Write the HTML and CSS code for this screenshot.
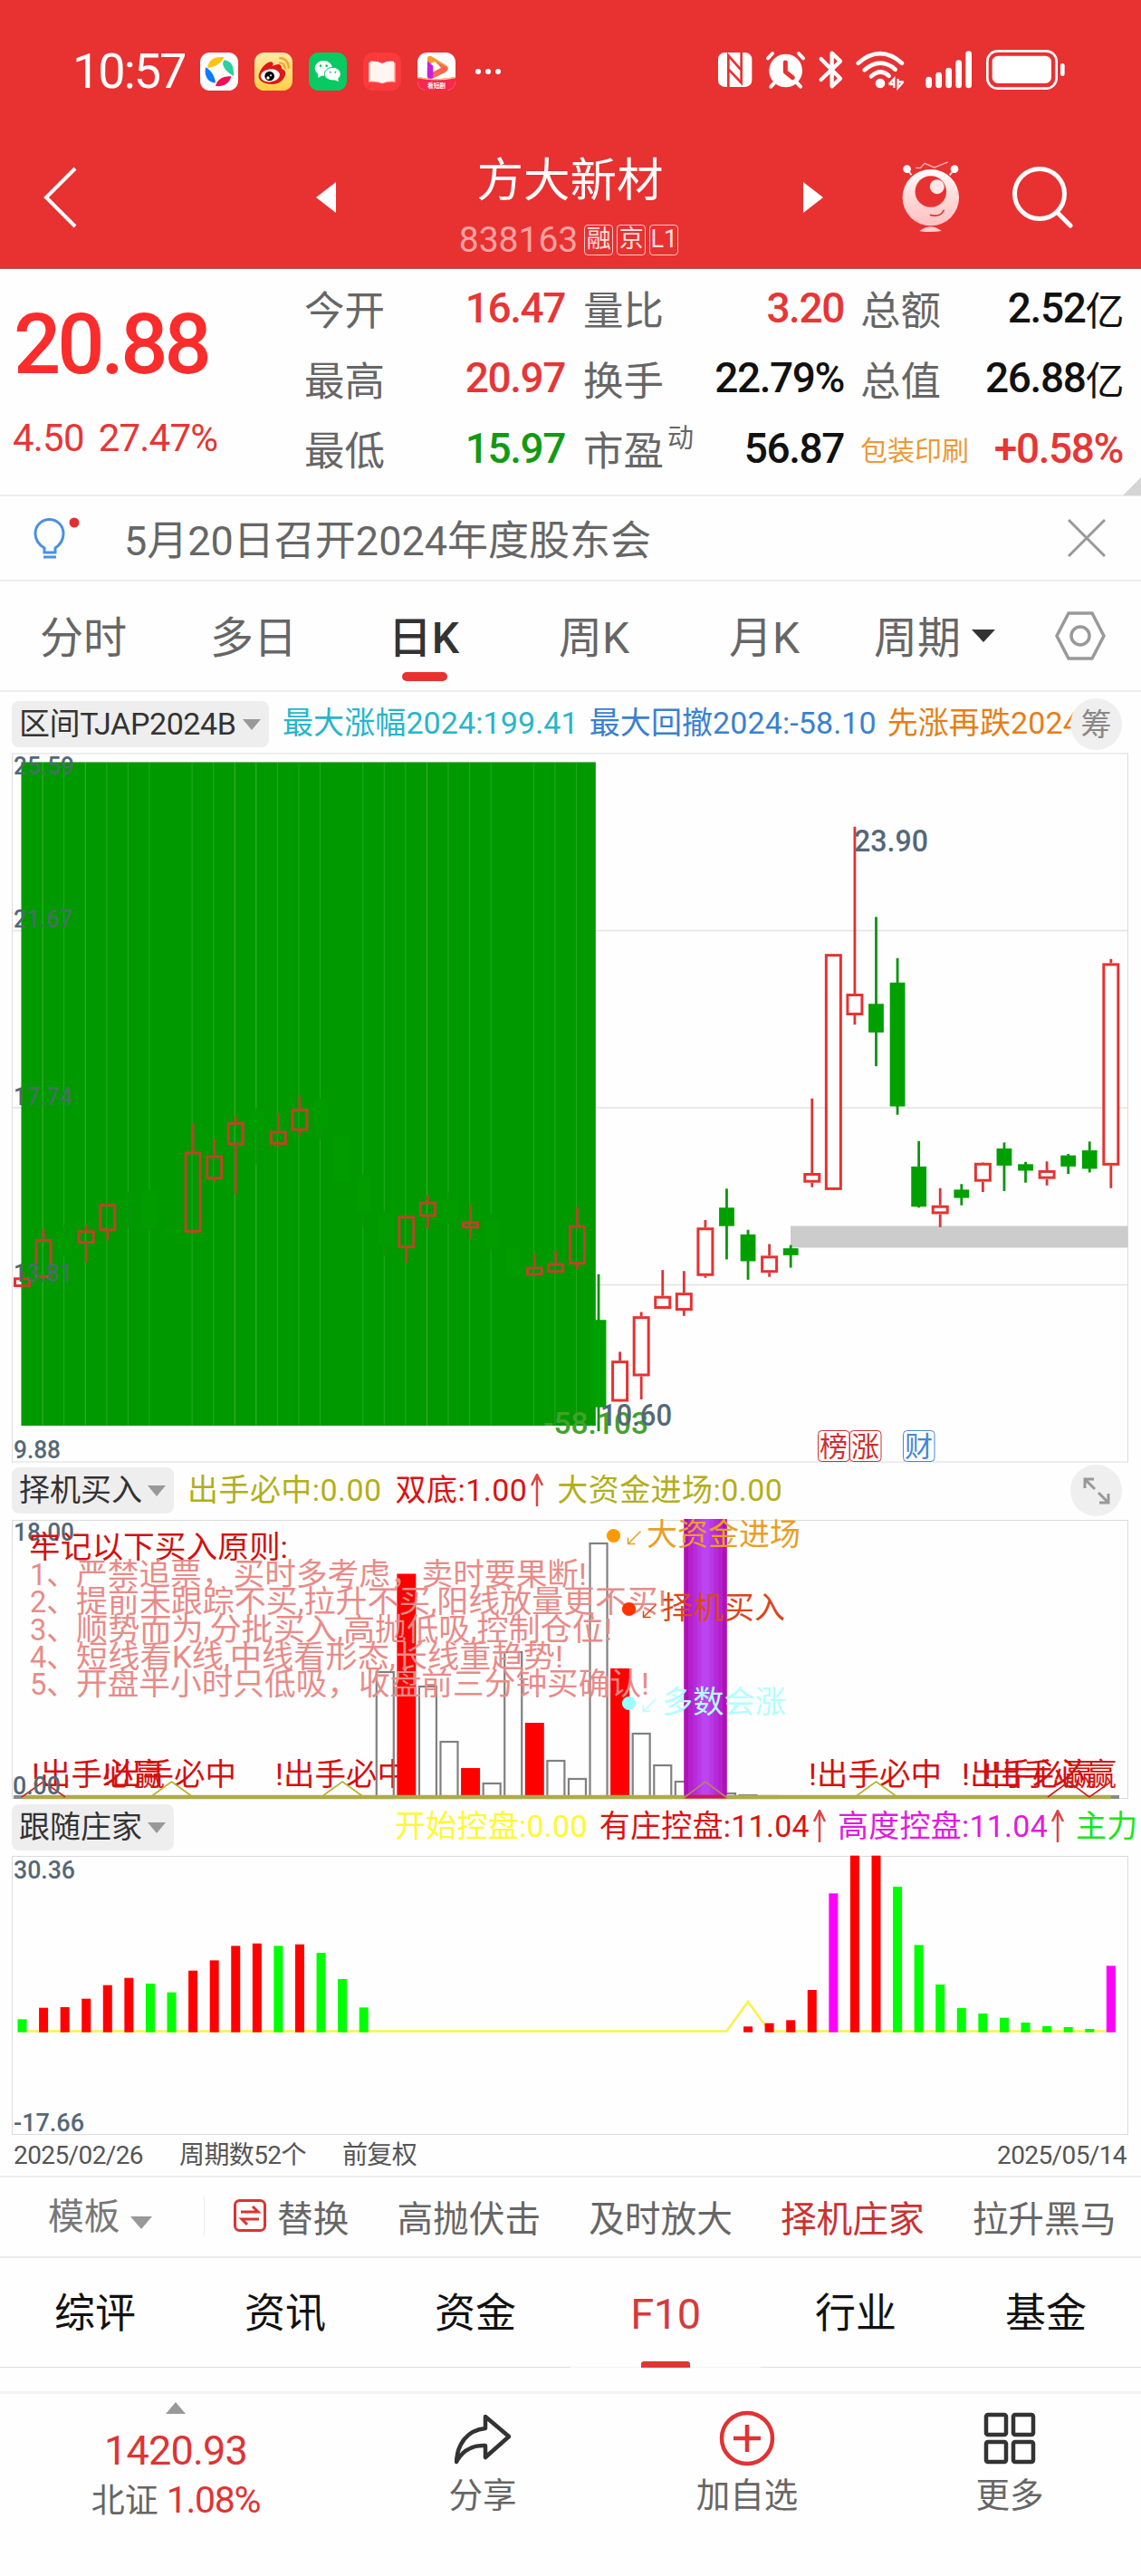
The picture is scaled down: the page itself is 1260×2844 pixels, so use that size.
FILE: index.html
```html
<!DOCTYPE html>
<html lang="zh-CN">
<head>
    <meta charset="UTF-8">
    <meta name="viewport" content="width=device-width, initial-scale=1.0">
    <title>方大新材 838163</title>
    <link rel="stylesheet" href="styles.css">
</head>
<body>
    <header class="header">
        <div class="status-bar">
            <span class="time">10:57</span>
            <div class="apps">
                <svg class="app" viewBox="0 0 126 126">
                    <rect width="126" height="126" rx="32" fill="#fff"/>
                    <path d="M25 45C31 22 50 12 79 16C69 37 49 49 25 51z" fill="#ffc40d"/>
                    <path d="M79 25C103 28 113 44 111 78C92 67 77 53 75 36z" fill="#2ed0a2"/>
                    <path d="M18 49C32 55 49 77 51 100C29 102 12 81 18 49z" fill="#0a7cf5"/>
                    <path d="M51 111C57 88 76 77 103 79C98 102 79 114 51 111z" fill="#f80d53"/>
                </svg>
                <svg class="app" viewBox="0 0 126 126">
                    <defs>
                        <linearGradient id="weibo" x2="0" y2="1"><stop stop-color="#ffeaa9"/><stop offset="1" stop-color="#ffd044"/></linearGradient>
                    </defs>
                    <rect width="126" height="126" rx="32" fill="url(#weibo)"/>
                    <path d="M14 76C18 52 42 29 57 31Q65 35 60 44Q90 31 90 53Q108 60 101 77C91 105 59 109 37 102Q11 94 14 76z" fill="#df1818"/>
                    <ellipse cx="52" cy="76" rx="32" ry="21" fill="#fff" transform="rotate(-8 52 76)"/>
                    <circle cx="50" cy="78" r="16" fill="#050505"/>
                    <circle cx="45" cy="84" r="5" fill="#fff"/>
                    <circle cx="54" cy="76" r="3" fill="#fff"/>
                    <path d="M81 34Q101 33 101 55M82 18Q113 19 114 53" fill="none" stroke="#f5a52b" stroke-width="7"/>
                </svg>
                <svg class="app" viewBox="0 0 126 126">
                    <rect width="126" height="126" rx="32" fill="#07ca62"/>
                    <ellipse cx="49" cy="52" rx="29" ry="25" fill="#fff"/>
                    <path d="M31 68L30 84L46 75z" fill="#fff"/>
                    <ellipse cx="79" cy="71" rx="27" ry="22" fill="#fff" stroke="#07ca62" stroke-width="3"/>
                    <path d="M82 90L99 96L96 83z" fill="#fff"/>
                    <g fill="#07ca62"><circle cx="39" cy="44" r="4"/><circle cx="59" cy="44" r="4"/><circle cx="71" cy="65" r="3"/><circle cx="88" cy="65" r="3"/></g>
                </svg>
                <svg class="app" viewBox="0 0 126 126">
                    <rect width="126" height="126" rx="32" fill="#fb3a3b"/>
                    <path d="M18 34Q43 26 63 37Q82 26 107 34V98Q84 95 63 103Q42 95 18 98z" fill="#ffb7ac"/>
                    <path d="M23 29Q45 27 63 36Q80 27 102 29V94Q81 92 63 101Q44 92 23 94z" fill="#fff6f2"/>
                </svg>
                <svg class="app" viewBox="0 0 126 126">
                    <defs>
                        <clipPath id="app-clip"><rect width="126" height="126" rx="32"/></clipPath>
                    </defs>
                    <g clip-path="url(#app-clip)">
                        <rect width="126" height="126" fill="#fff"/>
                        <path d="M33 17Q37 5 56 18L99 45Q106 55 95 60L60 31Q40 35 33 48z" fill="#f79a32"/>
                        <path d="M98 47Q106 56 90 67L50 86V65L78 50L60 31z" fill="#ff6550"/>
                        <path d="M33 28L52 44V84Q36 95 32 78z" fill="#c620dc"/>
                        <path d="M0 81Q63 94 126 81V126H0z" fill="#f8284c"/>
                        <path d="M0 81Q63 94 126 81V85Q63 98 0 85z" fill="#ffc87a"/>
                    </g>
                    <text x="63" y="116" class="app-label">看短剧</text>
                </svg>
            </div>
            <svg class="dots" viewBox="0 0 30 8"><circle cx="4" cy="4" r="3"/><circle cx="15" cy="4" r="3"/><circle cx="26" cy="4" r="3"/></svg>
            <svg class="system-icons" viewBox="0 0 1260 240">
                <rect x="39" y="57" width="112" height="114" rx="22" fill="#fff"/>
                <path d="M73 171V67L118 118M116 57V157L73 112" fill="none" stroke="#e83131" stroke-width="8"/>
                <circle cx="263" cy="117" r="55" fill="#fff"/>
                <path d="M204 76L219 60M321 76L306 60M225 158L214 170M301 158L312 170" stroke="#fff" stroke-width="12" stroke-linecap="round"/>
                <path d="M262 90V121L286 140" fill="none" stroke="#e83131" stroke-width="15" stroke-linecap="round" stroke-linejoin="round"/>
                <path d="M380 78L444 143L416 169V59L444 86L380 147" fill="none" stroke="#fff" stroke-width="13" stroke-linecap="round" stroke-linejoin="round"/>
                <path d="M503 92Q576 29 648 92M524 115Q576 70 626 113M546 136Q576 108 605 134" fill="none" stroke="#fff" stroke-width="14" stroke-linecap="round"/>
                <circle cx="576" cy="159" r="16" fill="#fff"/>
                <path d="M605 162L622 144V174M653 154L635 174V144M605 162H622M635 154H653" fill="none" stroke="#fff" stroke-width="7"/>
                <path d="M737 147V165M770 132V165M803 117V165M836 92V165M869 62V165" stroke="#fff" stroke-width="20" stroke-linecap="round"/>
                <rect x="931" y="52" width="229" height="124" rx="34" fill="none" stroke="#fff" stroke-width="8"/>
                <rect x="947" y="68" width="196" height="91" rx="20" fill="#fff"/>
                <path d="M1180 100V128" stroke="#fff" stroke-width="14" stroke-linecap="round"/>
            </svg>
        </div>
        <div class="nav-bar">
            <svg class="back" viewBox="0 0 38 68"><path d="M35 2L3 34L35 66"/></svg>
            <svg class="prev" viewBox="0 0 22 34"><path d="M0 17L22 0V34z"/></svg>
            <div class="stock">
                <h1>方大新材</h1>
                <div class="stock-code">
                    <span>838163</span><i>融</i><i>京</i><i>L1</i>
                </div>
            </div>
            <svg class="next" viewBox="0 0 22 34"><path d="M22 17L0 0V34z"/></svg>
            <svg class="robot" viewBox="0 0 200 250">
                <defs>
                    <linearGradient id="robot" x2="0" y2="1"><stop stop-color="#fff"/><stop offset=".5" stop-color="#ffd9d9"/><stop offset="1" stop-color="#ffc0c0"/></linearGradient>
                </defs>
                <path d="M25 32L40 52M183 32L167 52" stroke="#ffdede" stroke-width="6"/>
                <circle cx="25" cy="32" r="13" fill="#fff"/><circle cx="183" cy="32" r="13" fill="#fff"/>
                <path d="M54 28H70L84 13L116 27L161 9" fill="none" stroke="#ffb3b3" stroke-width="4"/>
                <circle cx="104" cy="127" r="94" fill="url(#robot)"/>
                <circle cx="104" cy="107" r="52" fill="#e83131"/>
                <circle cx="125" cy="91" r="24" fill="#ffe7e7"/>
                <path d="M101 185Q137 194 148 168" fill="none" stroke="#e83131" stroke-width="5"/>
                <path d="M66 238Q104 209 140 238Q104 244 66 238z" fill="#ffcccc"/>
            </svg>
            <svg class="search" viewBox="0 0 68 68"><circle cx="30" cy="30" r="27.5"/><path d="M49 50L64 65"/></svg>
        </div>
    </header>

    <section class="quote">
        <div class="price-box">
            <div class="price">20.88</div>
            <div class="change"><span>4.50</span><span>27.47%</span></div>
        </div>
        <div class="quote-grid">
            <label>今开</label><b class="up">16.47</b>
            <label>量比</label><b class="up">3.20</b>
            <label>总额</label><b>2.52<em>亿</em></b>
            <label>最高</label><b class="up">20.97</b>
            <label>换手</label><b>22.79%</b>
            <label>总值</label><b>26.88<em>亿</em></b>
            <label>最低</label><b class="down">15.97</b>
            <label>市盈<sup>动</sup></label><b>56.87</b>
            <label class="sector">包装印刷</label><b class="up">+0.58%</b>
        </div>
        <span class="corner"></span>
    </section>

    <section class="notice">
        <svg class="bulb" viewBox="0 0 56 54">
            <path d="M13 34Q3 28 3 18A15.500 15.500 0 0 1 34 18Q34 28 25 34V39H13zM12 44H26" fill="none" stroke="#4a90e2" stroke-width="3"/>
            <circle cx="46" cy="6" r="5.500" fill="#e03131"/>
        </svg>
        <p>5月20日召开2024年度股东会</p>
        <svg class="close" viewBox="0 0 42 42"><path d="M1 1L41 41M41 1L1 41"/></svg>
    </section>

    <nav class="period-tabs">
        <a>分时</a>
        <a>多日</a>
        <a class="active">日K</a>
        <a>周K</a>
        <a>月K</a>
        <a class="more">周期<i class="caret dark"></i></a>
        <svg class="settings" viewBox="0 0 56 54"><path d="M15 2H41L54 27L41 52H15L2 27z"/><circle cx="28" cy="27" r="10"/></svg>
    </nav>

    <div class="indicator-bar first">
        <button class="pill">区间TJAP2024B<i class="caret"></i></button>
        <div class="values clipped">
            <span class="cyan">最大涨幅2024:199.41</span>
            <span class="blue">最大回撤2024:-58.10</span>
            <span class="orange">先涨再跌2024:</span>
        </div>
        <span class="round">筹</span>
    </div>
    <svg class="chart" id="kline" viewBox="0 831 1260 784" width="1260" height="784"></svg>

    <div class="indicator-bar second">
        <button class="pill">择机买入<i class="caret"></i></button>
        <div class="values">
            <span class="olive">出手必中:0.00</span>
            <span class="red">双底:1.00<svg class="rise" viewBox="0 0 14 36"><path d="M7 36V2M1 13L7 1L13 13"/></svg></span>
            <span class="olive">大资金进场:0.00</span>
        </div>
        <span class="round"><svg class="expand" viewBox="0 0 30 30"><path d="M2 12V2H12M2 2L13 13M28 18V28H18M28 28L17 17"/></svg></span>
    </div>
    <svg class="chart" id="signal" viewBox="0 1676 1260 312" width="1260" height="312"></svg>

    <div class="indicator-bar third">
        <button class="pill">跟随庄家<i class="caret"></i></button>
        <div class="values">
            <span class="yellow">开始控盘:0.00</span>
            <span class="red">有庄控盘:11.04<svg class="rise" viewBox="0 0 14 36"><path d="M7 36V2M1 13L7 1L13 13"/></svg></span>
            <span class="magenta">高度控盘:11.04<svg class="rise" viewBox="0 0 14 36"><path d="M7 36V2M1 13L7 1L13 13"/></svg></span>
            <span class="green">主力</span>
        </div>
    </div>
    <svg class="chart" id="control" viewBox="0 2047 1260 311" width="1260" height="311"></svg>

    <div class="chart-footer">
        <span>2025/02/26</span><span>周期数52个</span><span>前复权</span><span>2025/05/14</span>
    </div>

    <div class="templates">
        <span class="template">模板<i class="caret"></i></span>
        <span class="swap">
            <svg viewBox="0 0 36 36"><rect x="1.500" y="1.500" width="33" height="33" rx="5"/><path d="M8 14H27L21 8M28 22H9L15 28"/></svg>替换
        </span>
        <span>高抛伏击</span>
        <span>及时放大</span>
        <span class="selected">择机庄家</span>
        <span>拉升黑马</span>
    </div>

    <nav class="info-tabs">
        <a>综评</a>
        <a>资讯</a>
        <a>资金</a>
        <a class="active">F10</a>
        <a>行业</a>
        <a>基金</a>
    </nav>

    <footer class="bottom-bar">
        <div class="index">
            <i class="caret-up"></i>
            <div class="index-value">1420.93</div>
            <div class="index-name">北证 <span>1.08%</span></div>
        </div>
        <div class="action">
            <svg viewBox="0 0 62 62"><path d="M34 7L60 29L34 52V39C19 38 9 44 2 57C3 37 14 22 34 20z"/></svg>
            <span>分享</span>
        </div>
        <div class="action add">
            <svg viewBox="0 0 62 62"><circle cx="31" cy="31" r="28"/><path d="M31 16V46M16 31H46"/></svg>
            <span>加自选</span>
        </div>
        <div class="action">
            <svg viewBox="0 0 62 62"><rect x="5" y="5" width="22" height="22" rx="2"/><rect x="35" y="5" width="22" height="22" rx="2"/><rect x="5" y="35" width="22" height="22" rx="2"/><rect x="35" y="35" width="22" height="22" rx="2"/></svg>
            <span>更多</span>
        </div>
    </footer>

    <script src="charts.js"></script>
</body>
</html>
```

FILE: styles.css
```css
:root {
    --red: #e83131;
    --up: #e63636;
    --down: #129a12;
    --gray: #666;
    --line: #ececec;
}

* {
    box-sizing: border-box;
}

body {
    margin: 0;
    width: 1260px;
    height: 2844px;
    overflow: hidden;
    background: #fefefe;
    color: #111;
    font-family: Roboto, "Noto Sans CJK SC", sans-serif;
}

svg {
    display: block;
    flex: none;
}

i, em {
    font-style: normal;
}

/* header */
.header {
    height: 297px;
    background: var(--red);
    border-bottom: 1px solid #a55;
    color: #fff;
}

.status-bar {
    height: 120px;
    padding: 38px 60px 0 80px;
    display: flex;
    align-items: center;
}

.time {
    width: 141px;
    font-size: 54px;
    line-height: 80px;
    letter-spacing: -2px;
}

.apps {
    display: flex;
    gap: 18px;
}

.app {
    width: 42px;
    height: 42px;
}

.app-label {
    font-size: 20px;
    font-weight: bold;
    fill: #fff;
    text-anchor: middle;
}

.dots {
    width: 30px;
    height: 8px;
    margin-left: 21px;
    fill: #fff;
}

.system-icons {
    width: 420px;
    height: 80px;
    margin-left: auto;
}

.nav-bar {
    height: 176px;
    display: flex;
    padding-left: 48px;
}

.nav-bar svg {
    fill: none;
    stroke: #fff;
}

.back {
    width: 38px;
    height: 68px;
    margin-top: 64px;
    stroke-width: 4;
}

.nav-bar .prev, .nav-bar .next {
    width: 22px;
    height: 34px;
    margin-top: 81px;
    fill: #fff;
    stroke: none;
}

.prev {
    margin-left: 263px;
}

.stock {
    width: 516px;
    display: flex;
    flex-direction: column;
    align-items: center;
}

.stock h1 {
    margin: 50px 0 0 1px;
    font-size: 51.5px;
    line-height: 60px;
    font-weight: 400;
}

.stock-code {
    display: flex;
    align-items: center;
    gap: 4px;
    margin: 14px 2px 0 0;
    color: #ffa3a1;
    font-size: 39px;
    line-height: 42px;
}

.stock-code span {
    margin-right: 3px;
}

.stock-code i {
    width: 32px;
    height: 34px;
    border: 1.5px solid #ffc4c4;
    border-radius: 4px;
    color: #ffe0e0;
    font-size: 27px;
    line-height: 30px;
    text-align: center;
}

.nav-bar .robot {
    width: 67px;
    height: 83px;
    margin: 56px 0 0 84px;
    stroke: none;
}

.search {
    width: 68px;
    height: 68px;
    margin: 64px 0 0 58px;
    stroke-width: 5;
    stroke-linecap: round;
}

/* quote */
.quote {
    position: relative;
    height: 251px;
    display: flex;
    border-bottom: 2px solid var(--line);
}

.price-box {
    width: 337px;
    color: #fa2c2c;
}

.price {
    padding: 32px 0 0 15px;
    font-size: 92px;
    font-weight: 500;
    line-height: 104px;
    letter-spacing: -4px;
}

.change {
    display: flex;
    gap: 16px;
    padding: 24px 0 0 14px;
    font-size: 42px;
    line-height: 54px;
    letter-spacing: -.8px;
    color: var(--up);
}

.quote-grid {
    display: grid;
    grid-template-columns: 120px 170px 138px 170px 136px 172px;
    grid-template-rows: 77px 78px 77px;
    padding-top: 4px;
    align-items: center;
}

.quote-grid label {
    margin-left: -1px;
    color: var(--gray);
    font-size: 44.5px;
    white-space: nowrap;
}

.quote-grid b {
    display: flex;
    align-items: center;
    justify-content: flex-end;
    margin-right: 3px;
    font-size: 46px;
    font-weight: 500;
    letter-spacing: -1.4px;
    white-space: nowrap;
}

.quote-grid label:nth-child(6n+3) {
    padding-left: 18px;
}

.quote-grid label:nth-child(6n+5) {
    padding-left: 16px;
}

.quote-grid em {
    font-size: 43px;
    font-weight: 400;
}

.quote-grid sup {
    position: relative;
    top: -20px;
    margin-left: 4px;
    font-size: 29px;
    line-height: 1;
    vertical-align: baseline;
}

.quote-grid .sector {
    font-size: 30px;
    color: #ed9937;
}

.up {
    color: var(--up);
}

.quote-grid .down {
    color: var(--down);
}

.corner {
    position: absolute;
    right: 0;
    bottom: -1px;
    border-left: 20px solid transparent;
    border-bottom: 20px solid #d5d5d5;
}

/* notice */
.notice {
    height: 94px;
    display: flex;
    align-items: center;
    padding: 0 39px 0 36px;
    border-bottom: 2px solid var(--line);
}

.bulb {
    width: 56px;
    height: 54px;
    margin-top: 7px;
}

.notice p {
    flex: 1;
    margin: 0 0 1px 45px;
    color: var(--gray);
    font-size: 45px;
}

.close {
    width: 42px;
    height: 42px;
    stroke: #999;
    stroke-width: 3;
}

/* period tabs */
.period-tabs {
    height: 122px;
    display: flex;
    align-items: center;
    border-bottom: 2px solid var(--line);
    color: var(--gray);
    font-size: 48px;
}

.period-tabs a {
    position: relative;
    left: -2px;
    width: 188px;
    padding-bottom: 5px;
    text-align: center;
}

.period-tabs .active {
    color: #333;
    font-weight: 500;
}

.period-tabs .active::after {
    content: "";
    position: absolute;
    left: 70px;
    bottom: -12px;
    width: 50px;
    height: 10px;
    border-radius: 5px;
    background: var(--red);
}

.period-tabs .more {
    left: 0;
    display: flex;
    align-items: center;
    width: 225px;
    padding-left: 25px;
}

.settings {
    width: 56px;
    height: 54px;
    fill: none;
    stroke: #999;
    stroke-width: 3.5;
}

.caret {
    display: inline-block;
    border: 10px solid transparent;
    border-top: 12px solid #999;
    border-bottom: 0;
}

.caret.dark {
    margin: 4px 0 0 12px;
    border-width: 14px 13px 0;
    border-top-color: #333;
}

/* indicator rows */
.indicator-bar {
    display: flex;
    align-items: flex-start;
    overflow: hidden;
    padding-left: 13px;
    font-size: 34px;
    line-height: 50px;
}

.indicator-bar.first {
    height: 67px;
    padding-top: 10px;
}

.indicator-bar.second {
    height: 61px;
    padding-top: 5px;
}

.indicator-bar.third {
    height: 59px;
    padding-top: 4px;
}

.pill {
    flex: none;
    display: flex;
    align-items: center;
    justify-content: space-between;
    width: 179px;
    height: 51px;
    padding: 0 9px 2px 8px;
    border: 0;
    border-radius: 8px;
    background: #eee;
    color: #333;
    font: inherit;
    white-space: nowrap;
}

.pill .caret {
    margin-top: 3px;
}

.first .pill {
    width: 284px;
    letter-spacing: -.4px;
}

.values {
    display: flex;
    gap: 15px;
    margin-left: 15px;
    letter-spacing: .45px;
    white-space: nowrap;
}

.values span {
    display: flex;
    align-items: center;
}

.clipped {
    gap: 12px;
    width: 874px;
    overflow: hidden;
    margin-top: -1px;
    letter-spacing: .1px;
}

.third .values {
    gap: 13px;
    margin: -1px 0 0 244px;
    letter-spacing: .25px;
}

.rise {
    width: 14px;
    height: 36px;
    margin-left: 4px;
    fill: none;
    stroke: #d44;
    stroke-width: 2.5;
}

.cyan { color: #27b5cb; }
.blue { color: #3a80d2; }
.orange { color: #e67e17; }
.olive { color: #b2af19; }
.red { color: #da1212; }
.yellow { color: #fff833; }
.magenta { color: #df1bdf; }
.green { color: #17e617; }

.round {
    flex: none;
    display: flex;
    align-items: center;
    justify-content: center;
    width: 57px;
    height: 57px;
    margin: -3px 21px 0 auto;
    border-radius: 50%;
    background: #efefef;
    color: #888;
}

.first .round {
    margin-top: -3px;
    margin-left: -4px;
    z-index: 1;
}

.expand {
    width: 30px;
    height: 30px;
    fill: none;
    stroke: #999;
    stroke-width: 3;
}

/* charts */
.chart text {
    font-family: Roboto, "Noto Sans CJK SC", sans-serif;
}

.axis {
    fill: #546878;
    font-size: 28px;
    font-weight: 500;
}

.mark {
    fill: #546878;
    font-size: 34px;
    font-weight: 500;
}

.badge {
    font-size: 31px;
}

.signal-text {
    fill: #d41010;
    font-size: 34px;
}

.rule-text {
    fill: #e88b88;
    font-size: 34px;
}

.chart-footer {
    display: flex;
    gap: 40px;
    height: 46px;
    padding: 0 16px 0 15px;
    border-bottom: 2px solid var(--line);
    color: #555;
    font-size: 28px;
    line-height: 43px;
    letter-spacing: -.6px;
}

.chart-footer span:last-child {
    margin-left: auto;
}

/* templates */
.templates {
    display: flex;
    align-items: center;
    gap: 53px;
    height: 89px;
    padding: 0 0 3px 53px;
    border-bottom: 2px solid var(--line);
    color: var(--gray);
    font-size: 39.7px;
    white-space: nowrap;
}

.template {
    width: 173px;
    height: 45px;
    line-height: 47px;
    border-right: 1px solid #eee;
    color: #777;
}

.template .caret {
    margin: 0 0 0 12px;
    border-width: 14px 12px 0;
}

.swap {
    display: flex;
    align-items: center;
    gap: 12px;
    margin-left: -21px;
}

.swap svg {
    width: 36px;
    height: 36px;
    fill: none;
    stroke: #d33;
    stroke-width: 3;
}

.selected {
    color: #cb3131;
}

/* info tabs */
.info-tabs {
    display: grid;
    grid-template-columns: repeat(6, 210px);
    height: 121px;
    font-size: 45px;
    line-height: 124px;
    text-align: center;
}

.info-tabs a {
    position: relative;
    height: 121px;
    border-bottom: 1.5px solid #ddd;
}

.info-tabs .active {
    border-color: #f3f3f3;
    color: #d63a3a;
    font-size: 47px;
    letter-spacing: -.5px;
}

.info-tabs .active::after {
    content: "";
    position: absolute;
    left: 78px;
    bottom: -1px;
    width: 54px;
    height: 7px;
    border-radius: 3px 3px 0 0;
    background: #e03535;
}

/* bottom bar */
.bottom-bar {
    display: grid;
    grid-template-columns: 388px 290px 294px 286px;
    height: 204px;
    margin-top: 26px;
    border-top: 3px solid #f2f2f2;
}

.index {
    display: flex;
    flex-direction: column;
    align-items: center;
    color: #e03333;
}

.caret-up {
    margin-top: 9px;
    border: 11px solid transparent;
    border-top: 0;
    border-bottom: 13px solid #999;
}

.index-value {
    margin-top: 15px;
    font-size: 45px;
    line-height: 52px;
    letter-spacing: -.8px;
}

.index-name {
    margin-top: 2px;
    color: var(--gray);
    font-size: 37px;
    line-height: 52px;
}

.index-name span {
    color: #e03333;
    font-size: 41px;
    letter-spacing: -1.3px;
}

.action {
    display: flex;
    flex-direction: column;
    align-items: center;
    padding-top: 18px;
    color: var(--gray);
    font-size: 37.5px;
    line-height: 50px;
}

.action svg {
    width: 62px;
    height: 62px;
    margin-bottom: 7px;
    fill: none;
    stroke: #333;
    stroke-width: 4.5;
    stroke-linejoin: round;
}

.add svg {
    stroke: #e03333;
}
```

FILE: charts.js
```js
const NS = 'http://www.w3.org/2000/svg';
const LEFT = 24.5;
const STEP = 23.575;
const cx = i => LEFT + STEP * i;

function el(parent, name, attrs, text) {
    const node = document.createElementNS(NS, name);
    for (const key in attrs) node.setAttribute(key, attrs[key]);
    if (text !== undefined) node.textContent = text;
    parent.appendChild(node);
    return node;
}

function rect(svg, x, y, x2, y2, attrs) {
    return el(svg, 'rect', { x, y, width: x2 - x, height: y2 - y, ...attrs });
}

function path(svg, d, stroke, width) {
    return el(svg, 'path', { d, fill: 'none', stroke, 'stroke-width': width });
}

function label(svg, x, y, width, cls, text, fill) {
    const node = el(svg, 'text', { x, y, class: cls, textLength: width, lengthAdjust: 'spacingAndGlyphs' }, text);
    if (fill) node.style.fill = fill;
    return node;
}

// K line: high, body top, body bottom, low, colour
const candles = [
    [1145,1157,1178,1178,'r'], [1052,1074,1158,1162,'r'], [1045,1064,1110,1113,'g'], [1043,1055,1084,1125,'r'],
    [997,998,1057,1077,'r'], [972,989,995,1048,'g'], [967,967,1050,1055,'g'], [1008,1050,1062,1070,'g'],
    [824,885,1060,1062,'r'], [857,893,945,951,'r'], [809,821,871,977,'r'], [790,800,842,912,'g'],
    [802,840,870,874,'r'], [765,792,840,851,'r'], [770,772,836,857,'g'], [845,852,951,978,'g'],
    [933,937,1018,1048,'g'], [1014,1018,1087,1110,'g'], [1023,1024,1094,1125,'r'], [979,993,1026,1051,'r'],
    [973,990,1037,1042,'g'], [999,1036,1051,1074,'r'], [1020,1030,1094,1102,'g'], [1085,1093,1153,1165,'g'],
    [1106,1134,1153,1155,'r'], [1100,1126,1147,1148,'r'], [1005,1044,1129,1139,'r'], [1150,1249,1438,1490,'g'],
    [1318,1337,1426,1426,'r'], [1232,1241,1371,1421,'r'], [1141,1197,1225,1225,'r'], [1143,1190,1229,1240,'r'],
    [1033,1049,1154,1158,'r'], [965,1006,1046,1118,'g'], [1054,1064,1122,1162,'g'], [1085,1110,1147,1156,'r'],
    [1087,1094,1109,1136,'g'], [770,931,952,962,'r'], [457,457,968,968,'r'], [182,543,590,610,'r'],
    [377,565,627,700,'g'], [466,519,787,805,'g'], [862,917,1004,1006,'g'], [964,1001,1020,1048,'r'],
    [955,967,985,1001,'g'], [908,909,950,972,'r'], [865,878,915,970,'g'], [907,912,926,952,'g'],
    [906,925,944,958,'r'], [890,893,917,933,'g'], [863,882,922,930,'g'], [468,477,915,964,'r']
];

function drawKline() {
    const svg = document.getElementById('kline');
    const y = v => 820 + v / 1.96;

    rect(svg, 13.5, 832, 1245.5, 1614, { fill: 'none', stroke: '#dcdcdc' });
    [1027.5, 1223, 1418.5].forEach(g => path(svg, `M13 ${g}H1245`, '#e2e2e2', 1.5));
    rect(svg, 873, 1353.5, 1245.5, 1377.5, { fill: '#ccc' });
    rect(svg, 23.5, 841.5, 657.8, 1574, { fill: '#009900' });
    path(svg, 'M23 841.5H658', '#7dbb7d', 1);
    for (let i = 1; i < 27; i++) {
        if (i === 7 || i === 15 || i === 23) continue;
        path(svg, `M${cx(i) - 1} 842V1574`, i % 9 === 1 || i % 8 === 3 ? '#4abb4a' : '#2ead2e', 1);
    }

    candles.forEach(([high, top, bottom, low, c], i) => {
        const x = cx(i);
        if (c === 'r') {
            path(svg, `M${x} ${y(high)}V${y(top)}M${x} ${y(bottom)}V${y(low)}`, '#dc3434', 2.8);
            rect(svg, x - 8, y(top) + 1.5, x + 8, Math.max(y(bottom) - 1.5, y(top) + 4), {
                fill: i < 27 ? 'none' : '#fff', stroke: '#e63232', 'stroke-width': 3
            });
        } else {
            path(svg, `M${x} ${y(high)}V${y(low)}`, '#0d930d', 2.8);
            rect(svg, x - 8.4, y(top), x + 8.4, y(bottom), { fill: i < 27 ? '#009d00' : '#00a000' });
        }
    });

    label(svg, 15, 855, 67, 'axis', '25.59');
    label(svg, 15, 1024, 65, 'axis', '21.67');
    label(svg, 15, 1219.5, 65, 'axis', '17.74');
    label(svg, 15, 1414.5, 65, 'axis', '13.81');
    label(svg, 15, 1610, 52, 'axis', '9.88');
    // selected range tint
    rect(svg, 23.5, 842, 657.8, 1574, { fill: '#009900', opacity: .2 });
    label(svg, 600, 1583, 116, 'mark', '-58.103', '#42a22c');
    label(svg, 943, 940, 82, 'mark', '23.90');
    label(svg, 663, 1574, 79, 'mark', '10.60');

    [[903, '榜', '#cf3030'], [938, '涨', '#cf3030'], [997, '财', '#4488d8']].forEach(([x, t, color]) => {
        rect(svg, x + .5, 1579.5, x + 35, 1613.5, { fill: '#fff', stroke: color, rx: 4 });
        label(svg, x + 2, 1608, 31, 'badge', t, color);
    });
}

// buy signal bars: index, top, filled
const signalBars = [
    [17,1845,0], [18,1737.5,1], [19,1861,0], [20,1922,0], [21,1952,1], [22,1968,0], [23,1823,0], [24,1902,1],
    [25,1943,0], [26,1963,0], [27,1703,0], [28,1842,1], [29,1913,0], [30,1948,0], [31,1966,0], [33,1979,0],
    [34,1981,0], [35,1982,0]
];

const rules = [
    ['1、', '严禁追票，买时多考虑，卖时要果断!', 564],
    ['2、', '提前未跟踪不买,拉升不买,阳线放量更不买!', 652],
    ['3、', '顺势而为,分批买入,高抛低吸,控制仓位!', 592],
    ['4、', '短线看K线,中线看形态,长线重趋势!', 538],
    ['5、', '开盘半小时只低吸，收盘前三分钟买确认!', 633]
];

function drawSignal() {
    const svg = document.getElementById('signal');
    rect(svg, 13.5, 1678.5, 1245.5, 1985.5, { fill: 'none', stroke: '#dcdcdc' });

    [[35, '赢'], [114, '中'], [304, '中'], [893, '中'], [1062, '赢'], [1086, '赢']].forEach(([x, t]) => {
        label(svg, x, 1971, 147, 'signal-text', '!出手必' + t);
    });

    path(svg, 'M15 1984H1236', '#888', 4);
    signalBars.forEach(([i, top, filled]) => {
        const x = cx(i);
        if (filled) rect(svg, x - 10.5, top, x + 10.5, 1985, { fill: '#f00' });
        else rect(svg, x - 9.5, top + 1, x + 9.5, 1985, { fill: 'none', stroke: '#808080', 'stroke-width': 2.2 });
    });

    ['#b010b8', '#b61fcc', '#b42bd9', '#b838e4', '#bb44f0'].forEach((c, k) => {
        const half = 23.8 - k * 4.8;
        rect(svg, 779 - half, 1677, 779 + half, 1985, { fill: c });
    });
    path(svg, 'M24 1984H1227', '#aeaa4c', 4.5);
    path(svg, 'M756 1983.5H802', '#cc1466', 4);
    path(svg, 'M755 1985L779 1967L803 1985', '#b88070', 1.8);

    [7, 15, 40].forEach(i => path(svg, `M${cx(i - 1)} 1984L${cx(i)} 1967L${cx(i + 1)} 1984`, '#b5b22c', 1.6));
    path(svg, 'M24 1984L48 1967L72 1984M1157 1984L1180 1967L1203 1984L1227 1967', '#c22', 1.6);

    label(svg, 15, 1701, 67, 'axis', '18.00');
    label(svg, 14, 1981, 53, 'axis', '0.00');
    label(svg, 32, 1720, 286, 'signal-text', '牢记以下买入原则:');
    rules.forEach(([n, text, width], i) => {
        const y = 1750 + i * 30.3;
        label(svg, 33, y, 51, 'rule-text', n);
        label(svg, 84, y, width, 'rule-text', text);
    });

    const legend = [
        [677.5, 1695.5, 714, 170, '大资金进场', '#ff9900', '#ea9e25'],
        [694.5, 1776.5, 731, 136, '择机买入', '#ff3300', '#da4719'],
        [694.5, 1880.5, 731, 137, '多数会涨', '#99ffff', '#b2ffff']
    ];
    legend.forEach(([x, y, tx, width, text, dot, color]) => {
        el(svg, 'circle', { cx: x, cy: y, r: 7.6, fill: dot });
        path(svg, `M${x + 30} ${y - 5}L${x + 16} ${y + 9}M${x + 16} ${y + 2}V${y + 9}H${x + 24}`, color, 1.5);
        label(svg, tx, y + 10, width, 'signal-text', text, color);
    });
}

const colors = { r: '#ff0000', g: '#00ff00', m: '#ff00ff' };
const controlBars = [
    [0,748,'g'], [1,710,'r'], [2,708,'r'], [3,680,'r'], [4,635,'r'], [5,611,'r'], [6,630,'g'], [7,659,'g'],
    [8,587,'r'], [9,553,'r'], [10,505,'r'], [11,497,'r'], [12,505,'g'], [13,500,'r'], [14,528,'g'], [15,615,'g'],
    [16,709,'g'], [34,772,'r'], [35,761,'r'], [36,751,'r'], [37,651,'r'], [38,331,'m'], [39,206,'r'], [40,206,'r'],
    [41,309,'g'], [42,502,'g'], [43,633,'g'], [44,711,'g'], [45,729,'g'], [46,743,'g'], [47,759,'g'], [48,771,'g'],
    [49,774,'g'], [50,780,'g'], [51,571,'m']
];

function drawControl() {
    const svg = document.getElementById('control');
    rect(svg, 13.5, 2049.5, 1245.5, 2356.5, { fill: 'none', stroke: '#dcdcdc' });
    path(svg, `M24 2242.5H${cx(33)}L${cx(34)} 2210L${cx(35)} 2242.5H1227`, '#f8f348', 2.5);
    controlBars.forEach(([i, top, c]) => {
        rect(svg, cx(i) - 5, 1980 + top / 3, cx(i) + 5, 2243.7, { fill: colors[c] });
    });
    label(svg, 15, 2074, 68, 'axis', '30.36');
    label(svg, 15, 2353, 78, 'axis', '-17.66');
}

drawKline();
drawSignal();
drawControl();
```
